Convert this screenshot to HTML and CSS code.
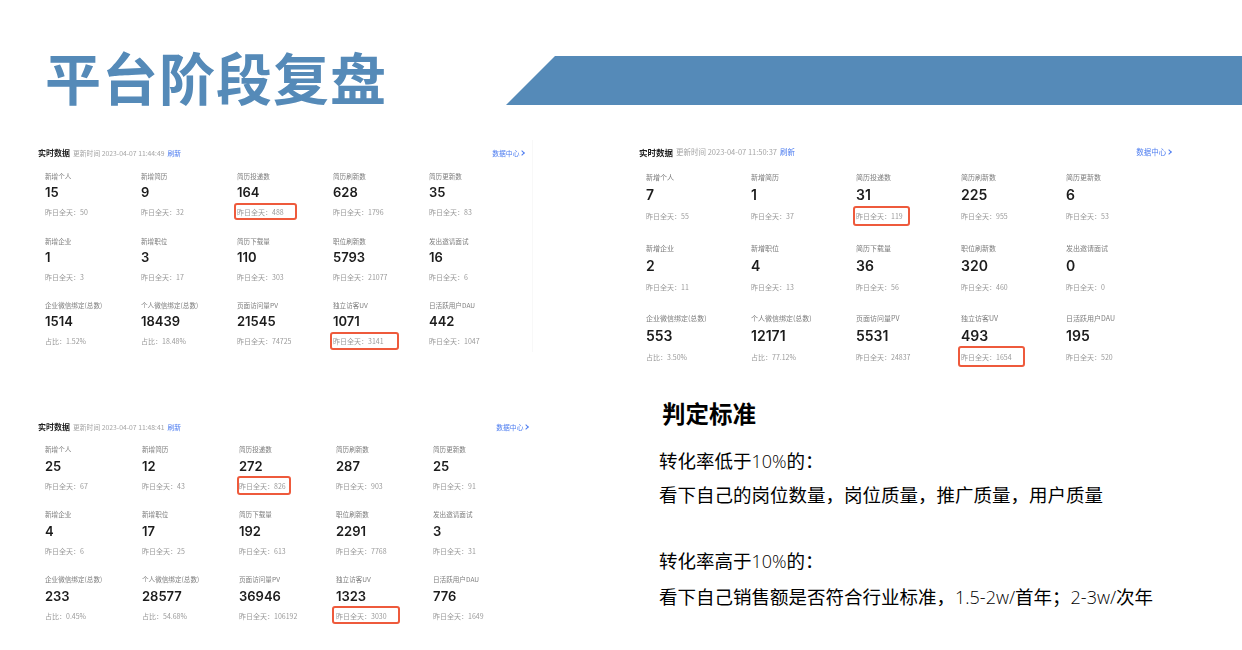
FILE: index.html
```html
<!DOCTYPE html>
<html lang="zh-CN">

<head>
    <meta charset="UTF-8">
    <meta name="viewport" content="width=device-width, initial-scale=1.0">
    <title>平台阶段复盘</title>
    <link rel="stylesheet" href="styles.css">
</head>

<body>
    <main class="slide">
        <header class="banner">
            <h1 class="title">平台阶段复盘</h1>
            <div class="ribbon"></div>
        </header>

        <section class="board">
            <div class="column column-left">
                <div class="panel panel-a">
                    <div class="panel-head">
                        <span class="panel-name">实时数据</span>
                        <span class="panel-time">更新时间 2023-04-07 11:44:49</span>
                        <span class="link">刷新</span>
                        <span class="link panel-more">数据中心 <i class="chevron"></i></span>
                    </div>
                    <div class="stats">
                        <div class="stat"><p class="label">新增个人</p><p class="value">15</p><p class="sub">昨日全天：50</p></div>
                        <div class="stat"><p class="label">新增简历</p><p class="value">9</p><p class="sub">昨日全天：32</p></div>
                        <div class="stat"><p class="label">简历投递数</p><p class="value">164</p><p class="sub mark">昨日全天：488</p></div>
                        <div class="stat"><p class="label">简历刷新数</p><p class="value">628</p><p class="sub">昨日全天：1796</p></div>
                        <div class="stat"><p class="label">简历更新数</p><p class="value">35</p><p class="sub">昨日全天：83</p></div>
                        <div class="stat"><p class="label">新增企业</p><p class="value">1</p><p class="sub">昨日全天：3</p></div>
                        <div class="stat"><p class="label">新增职位</p><p class="value">3</p><p class="sub">昨日全天：17</p></div>
                        <div class="stat"><p class="label">简历下载量</p><p class="value">110</p><p class="sub">昨日全天：303</p></div>
                        <div class="stat"><p class="label">职位刷新数</p><p class="value">5793</p><p class="sub">昨日全天：21077</p></div>
                        <div class="stat"><p class="label">发出邀请面试</p><p class="value">16</p><p class="sub">昨日全天：6</p></div>
                        <div class="stat"><p class="label">企业微信绑定(总数)</p><p class="value">1514</p><p class="sub">占比：1.52%</p></div>
                        <div class="stat"><p class="label">个人微信绑定(总数)</p><p class="value">18439</p><p class="sub">占比：18.48%</p></div>
                        <div class="stat"><p class="label">页面访问量PV</p><p class="value">21545</p><p class="sub">昨日全天：74725</p></div>
                        <div class="stat"><p class="label">独立访客UV</p><p class="value">1071</p><p class="sub mark mark-wide">昨日全天：3141</p></div>
                        <div class="stat"><p class="label">日活跃用户DAU</p><p class="value">442</p><p class="sub">昨日全天：1047</p></div>
                    </div>
                </div>

                <div class="panel panel-c">
                    <div class="panel-head">
                        <span class="panel-name">实时数据</span>
                        <span class="panel-time">更新时间 2023-04-07 11:48:41</span>
                        <span class="link">刷新</span>
                        <span class="link panel-more">数据中心 <i class="chevron"></i></span>
                    </div>
                    <div class="stats">
                        <div class="stat"><p class="label">新增个人</p><p class="value">25</p><p class="sub">昨日全天：67</p></div>
                        <div class="stat"><p class="label">新增简历</p><p class="value">12</p><p class="sub">昨日全天：43</p></div>
                        <div class="stat"><p class="label">简历投递数</p><p class="value">272</p><p class="sub mark">昨日全天：826</p></div>
                        <div class="stat"><p class="label">简历刷新数</p><p class="value">287</p><p class="sub">昨日全天：903</p></div>
                        <div class="stat"><p class="label">简历更新数</p><p class="value">25</p><p class="sub">昨日全天：91</p></div>
                        <div class="stat"><p class="label">新增企业</p><p class="value">4</p><p class="sub">昨日全天：6</p></div>
                        <div class="stat"><p class="label">新增职位</p><p class="value">17</p><p class="sub">昨日全天：25</p></div>
                        <div class="stat"><p class="label">简历下载量</p><p class="value">192</p><p class="sub">昨日全天：613</p></div>
                        <div class="stat"><p class="label">职位刷新数</p><p class="value">2291</p><p class="sub">昨日全天：7768</p></div>
                        <div class="stat"><p class="label">发出邀请面试</p><p class="value">3</p><p class="sub">昨日全天：31</p></div>
                        <div class="stat"><p class="label">企业微信绑定(总数)</p><p class="value">233</p><p class="sub">占比：0.45%</p></div>
                        <div class="stat"><p class="label">个人微信绑定(总数)</p><p class="value">28577</p><p class="sub">占比：54.68%</p></div>
                        <div class="stat"><p class="label">页面访问量PV</p><p class="value">36946</p><p class="sub">昨日全天：106192</p></div>
                        <div class="stat"><p class="label">独立访客UV</p><p class="value">1323</p><p class="sub mark mark-wide">昨日全天：3030</p></div>
                        <div class="stat"><p class="label">日活跃用户DAU</p><p class="value">776</p><p class="sub">昨日全天：1649</p></div>
                    </div>
                </div>
            </div>

            <div class="column column-right">
                <div class="panel panel-b">
                    <div class="panel-head">
                        <span class="panel-name">实时数据</span>
                        <span class="panel-time">更新时间 2023-04-07 11:50:37</span>
                        <span class="link">刷新</span>
                        <span class="link panel-more">数据中心 <i class="chevron"></i></span>
                    </div>
                    <div class="stats">
                        <div class="stat"><p class="label">新增个人</p><p class="value">7</p><p class="sub">昨日全天：55</p></div>
                        <div class="stat"><p class="label">新增简历</p><p class="value">1</p><p class="sub">昨日全天：37</p></div>
                        <div class="stat"><p class="label">简历投递数</p><p class="value">31</p><p class="sub mark">昨日全天：119</p></div>
                        <div class="stat"><p class="label">简历刷新数</p><p class="value">225</p><p class="sub">昨日全天：955</p></div>
                        <div class="stat"><p class="label">简历更新数</p><p class="value">6</p><p class="sub">昨日全天：53</p></div>
                        <div class="stat"><p class="label">新增企业</p><p class="value">2</p><p class="sub">昨日全天：11</p></div>
                        <div class="stat"><p class="label">新增职位</p><p class="value">4</p><p class="sub">昨日全天：13</p></div>
                        <div class="stat"><p class="label">简历下载量</p><p class="value">36</p><p class="sub">昨日全天：56</p></div>
                        <div class="stat"><p class="label">职位刷新数</p><p class="value">320</p><p class="sub">昨日全天：460</p></div>
                        <div class="stat"><p class="label">发出邀请面试</p><p class="value">0</p><p class="sub">昨日全天：0</p></div>
                        <div class="stat"><p class="label">企业微信绑定(总数)</p><p class="value">553</p><p class="sub">占比：3.50%</p></div>
                        <div class="stat"><p class="label">个人微信绑定(总数)</p><p class="value">12171</p><p class="sub">占比：77.12%</p></div>
                        <div class="stat"><p class="label">页面访问量PV</p><p class="value">5531</p><p class="sub">昨日全天：24837</p></div>
                        <div class="stat"><p class="label">独立访客UV</p><p class="value">493</p><p class="sub mark mark-wide">昨日全天：1654</p></div>
                        <div class="stat"><p class="label">日活跃用户DAU</p><p class="value">195</p><p class="sub">昨日全天：520</p></div>
                    </div>
                </div>

                <div class="rules">
                    <h2 class="rules-title">判定标准</h2>
                    <p class="rule">转化率低于<span class="latin">10%</span>的：</p>
                    <p class="rule">看下自己的岗位数量，岗位质量，推广质量，用户质量</p>
                    <p class="rule rule-gap">转化率高于<span class="latin">10%</span>的：</p>
                    <p class="rule rule-last">看下自己销售额是否符合行业标准，<span class="latin">1.5-2w/</span>首年；<span class="latin">2-3w/</span>次年</p>
                </div>
            </div>
        </section>
    </main>
</body>

</html>
```

FILE: styles.css
```css
*,
*::after {
    box-sizing: border-box;
}

body {
    margin: 0;
    background-color: #fff;
    color: #000;
    font-family: "Noto Sans CJK SC", "Liberation Sans", sans-serif;
}

p,
h1,
h2 {
    margin: 0;
}

.slide {
    width: 1242px;
    height: 650px;
    overflow: hidden;
    padding-top: 56px;
}

/* header */
.banner {
    height: 49px;
    display: flex;
    justify-content: space-between;
}

.title {
    margin-top: -5px;
    padding-left: 45px;
    color: #558ab8;
    font-size: 56px;
    font-weight: 700;
    line-height: 49px;
    letter-spacing: 1px;
}

.ribbon {
    width: 736px;
    height: 49px;
    background-color: #558ab8;
    clip-path: polygon(49px 0, 100% 0, 100% 100%, 0 100%);
}

/* layout of the slide */
.board {
    display: flex;
    gap: 106px;
    padding: 40px 0 0 38px;
}

.column {
    display: flex;
    flex-direction: column;
}

/* data panels */
.panel {
    --col: 96px;
    --row: 64.5px;
    --pad-top: 11px;
    --value-top: 4px;
    --sub-top: 7px;
    --value-size: 13px;
    --head-size: 6.8px;
    --name-size: 8px;
    --label-size: 6.6px;
    position: relative;
    color: #1c1c1c;
    filter: blur(.35px);
}

.panel-a {
    width: 495px;
    height: 275px;
    padding: 1px 8px 0 0;
}

/* faint edge of the cropped card */
.panel-a::after {
    content: "";
    position: absolute;
    right: 0;
    top: -5px;
    bottom: 68px;
    width: 1px;
    background-color: #f8f8f8;
}

.panel-b {
    --col: 105px;
    --row: 70.5px;
    --pad-top: 13px;
    --value-top: 5px;
    --sub-top: 9px;
    --value-size: 14px;
    --head-size: 7.5px;
    --name-size: 8.5px;
    --label-size: 7px;
    width: 533px;
    height: 253px;
}

.panel-c {
    --col: 97px;
    --row: 65px;
    --pad-top: 10px;
    --value-top: 5px;
    --sub-top: 7px;
    width: 491px;
}

.panel-head {
    height: 14px;
    display: flex;
    align-items: center;
    gap: 3px;
    font-size: var(--head-size);
    line-height: 14px;
}

.panel-name {
    font-size: var(--name-size);
    font-weight: 700;
}

.panel-time {
    color: #a5a5a5;
}

.link {
    color: #4c7cf0;
}

.panel-more {
    margin-left: auto;
}

.chevron {
    display: inline-block;
    width: 4px;
    height: 4px;
    margin: 0 1px 1px -1px;
    border-top: 1px solid #4c7cf0;
    border-right: 1px solid #4c7cf0;
    transform: rotate(45deg);
}

.stats {
    display: grid;
    grid-template-columns: repeat(5, var(--col));
    grid-auto-rows: var(--row);
    padding: var(--pad-top) 0 0 7px;
}

.stat {
    display: flex;
    flex-direction: column;
    align-items: flex-start;
}

.label {
    color: #7d7d7d;
    font-size: var(--label-size);
    line-height: 10px;
}

.value {
    margin-top: var(--value-top);
    font-family: "Inter", "Liberation Sans", sans-serif;
    font-size: var(--value-size);
    font-weight: 600;
    line-height: 15px;
}

.sub {
    position: relative;
    margin-top: var(--sub-top);
    color: #9a9a9a;
    font-size: 7px;
    line-height: 10px;
}

/* red boxes drawn over the figures */
.mark::after {
    content: "";
    position: absolute;
    left: -3px;
    top: -4px;
    width: 63px;
    height: 17px;
    border: 2px solid #ee5a3c;
    border-radius: 3px;
}

.mark-wide::after {
    width: 69px;
    height: 18px;
}

.panel-b .mark::after {
    top: -5px;
    width: 57px;
    height: 20px;
}

.panel-b .mark-wide::after {
    top: -6px;
    width: 67px;
    height: 21px;
}

.panel-c .mark::after {
    left: -2px;
    top: -5px;
    width: 54px;
    height: 19px;
}

.panel-c .mark-wide::after {
    left: -4px;
    width: 68px;
    height: 18px;
}

/* text block on the right */
.rules {
    padding-left: 20px;
}

.rules-title {
    padding-left: 3px;
    font-size: 23.5px;
    font-weight: 700;
    line-height: 30px;
}

.rule {
    font-size: 18.5px;
    line-height: 33px;
}

.rules-title + .rule {
    margin-top: 16px;
}

.rule-gap {
    margin-top: 33px;
}

.rule-last {
    margin-top: 2px;
}

.latin {
    font-family: "Open Sans", "Liberation Sans", sans-serif;
    font-size: 18px;
    font-weight: 300;
}
```
